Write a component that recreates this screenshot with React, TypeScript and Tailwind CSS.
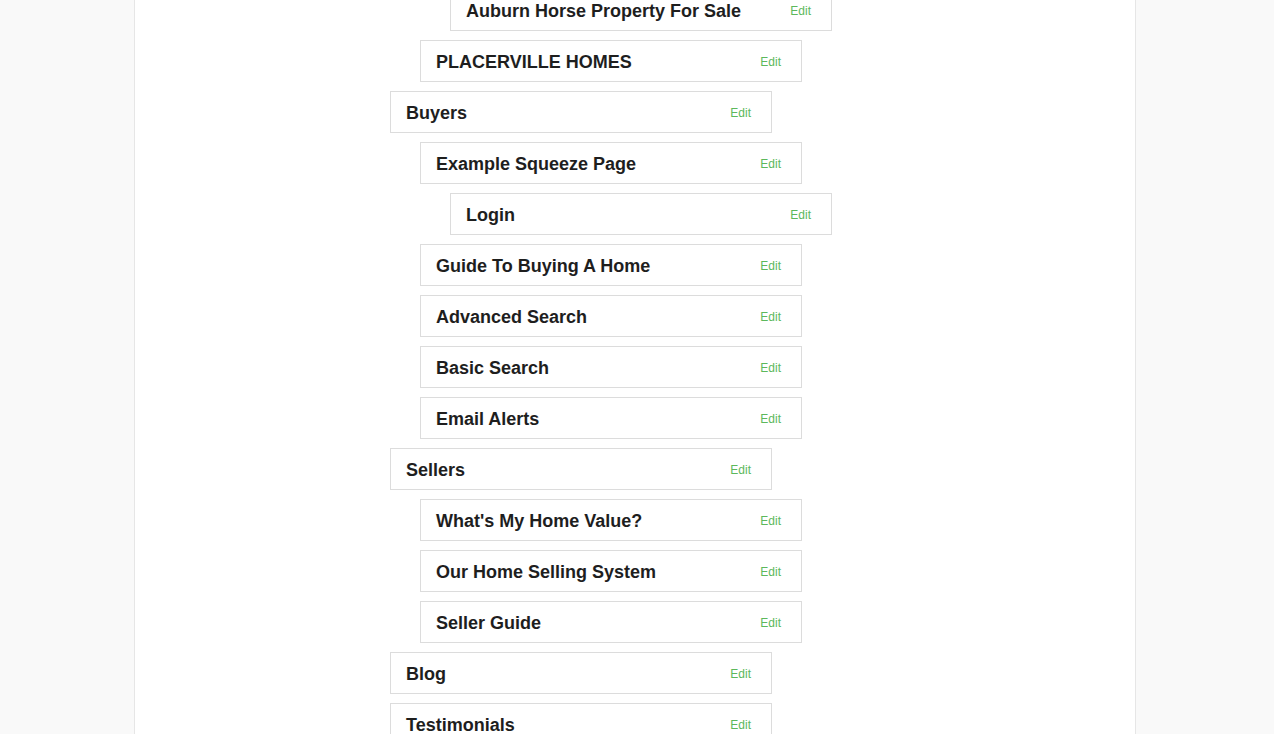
import React from 'react';

interface PageItem {
  title: string;
  level: number;
}

const pages: PageItem[] = [
  { title: 'Auburn Horse Property For Sale', level: 2 },
  { title: 'PLACERVILLE HOMES', level: 1 },
  { title: 'Buyers', level: 0 },
  { title: 'Example Squeeze Page', level: 1 },
  { title: 'Login', level: 2 },
  { title: 'Guide To Buying A Home', level: 1 },
  { title: 'Advanced Search', level: 1 },
  { title: 'Basic Search', level: 1 },
  { title: 'Email Alerts', level: 1 },
  { title: 'Sellers', level: 0 },
  { title: "What's My Home Value?", level: 1 },
  { title: 'Our Home Selling System', level: 1 },
  { title: 'Seller Guide', level: 1 },
  { title: 'Blog', level: 0 },
  { title: 'Testimonials', level: 0 },
];

const indent = ['ml-0', 'ml-[30px]', 'ml-[60px]'];

const App: React.FC = () => {
  return (
    <div
      className="h-screen overflow-hidden bg-[#f9f9f9]"
      style={{ fontFamily: '"Liberation Sans", Arial, sans-serif' }}
    >
      <div className="ml-[134px] w-[1002px] h-full bg-white border-x border-[#e6e6e6] overflow-hidden">
        <ul className="-mt-[11px] pl-[255px] flex flex-col gap-[9px]">
          {pages.map((page) => (
            <li
              key={page.title}
              className={`${indent[page.level]} w-[382px] h-[42px] flex items-center justify-between border border-[#dcdcdc] bg-white pl-[15px] pr-[20px] pt-[2px]`}
            >
              <span className="text-[18px] font-bold text-[#1e1e1e] leading-none">{page.title}</span>
              <a href="#" className="text-[12px] text-[#5cb85c] leading-none">
                Edit
              </a>
            </li>
          ))}
        </ul>
      </div>
    </div>
  );
};

export default App;
